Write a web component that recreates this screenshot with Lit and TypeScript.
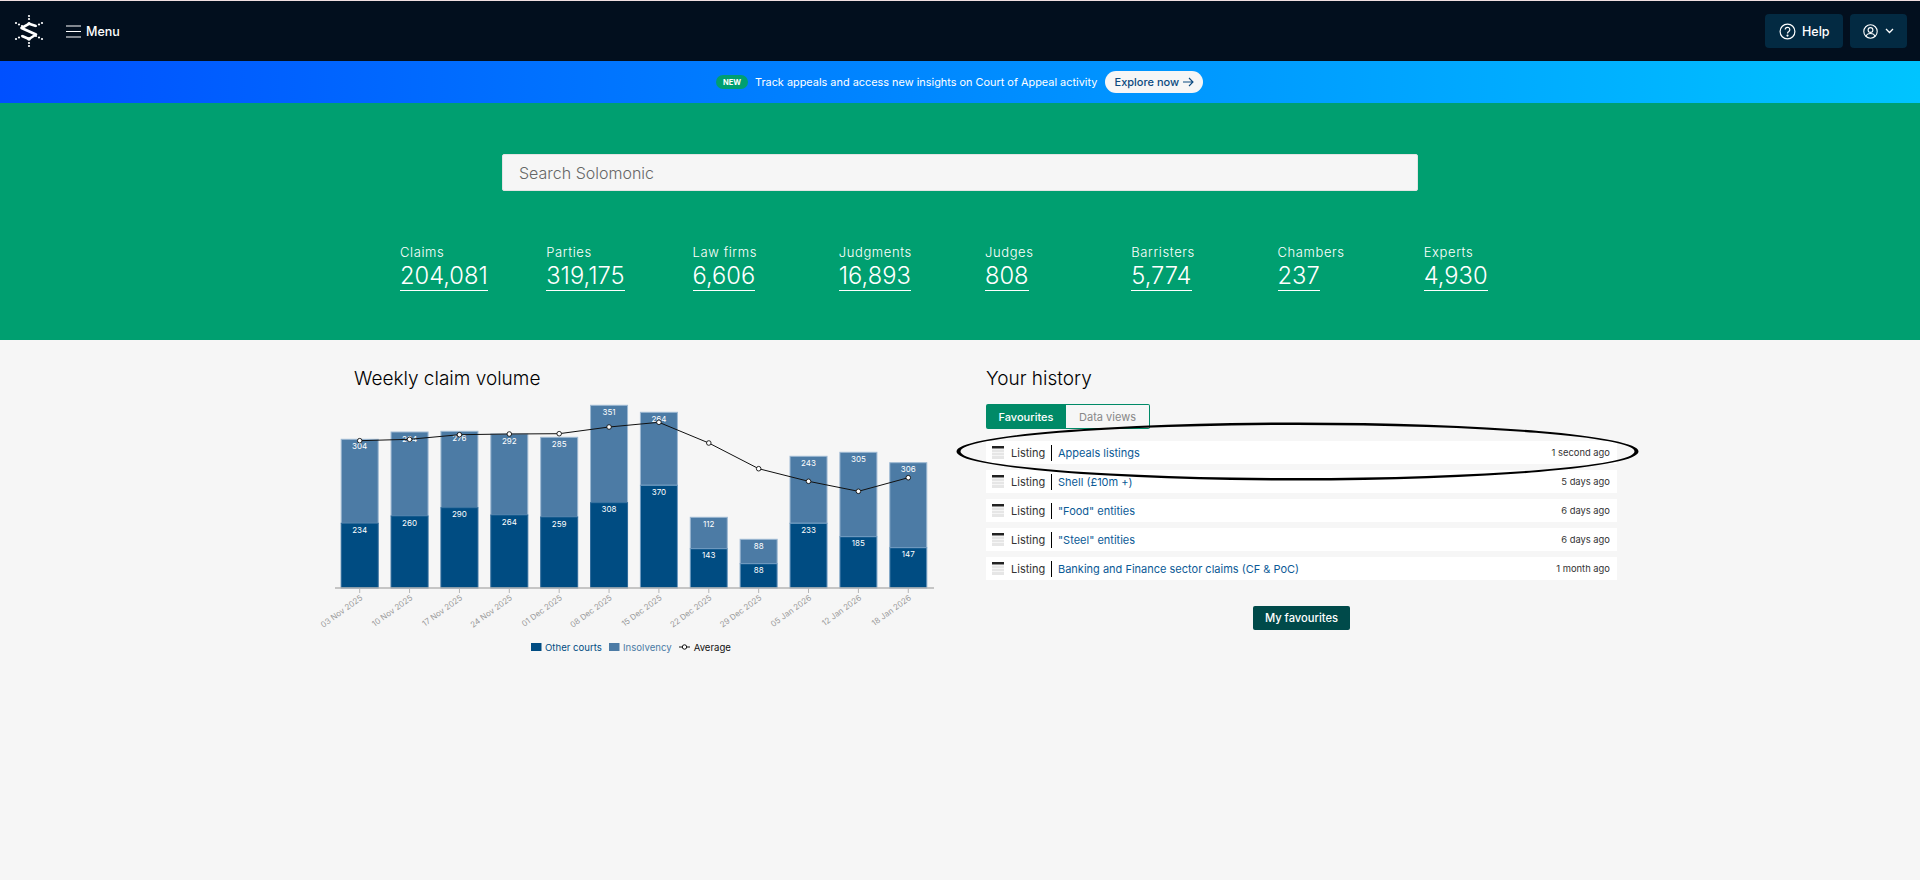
import { LitElement, html, css, svg } from "lit";
import { customElement } from "lit/decorators.js";

const stats = [
  ["Claims", "204,081"], ["Parties", "319,175"], ["Law firms", "6,606"], ["Judgments", "16,893"],
  ["Judges", "808"], ["Barristers", "5,774"], ["Chambers", "237"], ["Experts", "4,930"],
];
const history = [
  ["Appeals listings", "1 second ago"],
  ["Shell (£10m +)", "5 days ago"],
  ['"Food" entities', "6 days ago"],
  ['"Steel" entities', "6 days ago"],
  ["Banking and Finance sector claims (CF & PoC)", "1 month ago"],
];
const OY = 393;
const AXIS = 588 - OY;
const bars = [
  ["03 Nov 2025", 523.3, 439.3, "234", "304", 440.7],
  ["10 Nov 2025", 516, 432, "260", "284", 439.3],
  ["17 Nov 2025", 507.7, 431.3, "290", "276", 434.7],
  ["24 Nov 2025", 515, 434, "264", "292", 434],
  ["01 Dec 2025", 517, 437.3, "259", "285", 433.7],
  ["08 Dec 2025", 502.7, 405.3, "308", "351", 427],
  ["15 Dec 2025", 485.3, 412.3, "370", "264", 422.3],
  ["22 Dec 2025", 548.7, 517.3, "143", "112", 443],
  ["29 Dec 2025", 563.7, 539.3, "88", "88", 468.7],
  ["05 Jan 2026", 523.3, 456.3, "233", "243", 481.3],
  ["12 Jan 2026", 536.7, 452.3, "185", "305", 491.3],
  ["18 Jan 2026", 547.7, 462.7, "147", "306", 477.7],
] as const;
const cx = (i: number) => 39.7 + i * 49.87;
const yy = (v: number) => v - OY;

@customElement("app-root")
export class AppRoot extends LitElement {
  static styles = css`
    :host { display: block; min-height: 880px; background: #f6f6f6; font-family: Inter, "Liberation Sans", sans-serif; color: #111; position: relative; overflow: hidden; }
    * { box-sizing: border-box; }
    .nav { height: 61px; border-top: 1px solid #f0dfe0; background: #020f1e; display: flex; align-items: center; padding: 0 13px 0 14px; color: #fff; }
    .logo { width: 30px; height: 34px; display: block; }
    .menu { display: flex; align-items: center; margin-left: 22px; font-size: 12.5px; font-weight: 500; gap: 5px; }
    .spacer { flex: 1; }
    .btn { height: 34px; background: #032a42; border-radius: 4px; display: flex; align-items: center; color: #fff; font-size: 12.5px; font-weight: 500; }
    .help { width: 78px; padding-left: 14px; gap: 6px; }
    .user { width: 57px; padding-left: 13px; gap: 7px; margin-left: 7px; }
    .banner { height: 42px; background: linear-gradient(90deg, #0050ff 0%, #00c4ff 100%); display: flex; align-items: center; padding-left: 716px; color: #fff; font-size: 10.9px; }
    .new { width: 32px; height: 14px; border-radius: 7px; background: #009f70; font-size: 7.5px; font-weight: 700; display: flex; align-items: center; justify-content: center; margin-right: 7px; }
    .explore { margin-left: 8px; width: 98px; height: 22px; border-radius: 11px; background: #f6f6f6; color: #0b4a80; font-size: 11px; font-weight: 500; display: flex; align-items: center; justify-content: center; gap: 4px; }
    .hero { height: 237px; background: #009f70; padding-top: 51px; }
    .search { width: 916px; height: 37px; margin-left: 502px; background: #f6f6f6; border-radius: 2px; border: 1px solid #e4e4e4; padding-left: 16px; display: flex; align-items: center; font-size: 16px; font-weight: 300; color: #666; }
    .stats { display: grid; grid-template-columns: repeat(8, 146.25px); margin: 53px 0 0 400px; color: #fff; }
    .stat-label { font-size: 13px; font-weight: 300; letter-spacing: 0.6px; line-height: 16px; }
    .stat-value { display: inline-block; font-size: 23.7px; font-weight: 300; line-height: 29px; border-bottom: 1px solid #fff; margin-top: 1px; }
    .main { display: grid; grid-template-columns: 666px 631px; padding: 25px 0 0 320px; }
    h2 { margin: 0; font-size: 19px; font-weight: 300; line-height: 28px; color: #000; }
    .left h2 { padding-left: 34px; }
    .chart { display: block; }
    .tabs { display: flex; margin-top: 11px; width: 164px; height: 25px; font-size: 11px; }
    .tab-on { width: 80px; background: #008a67; color: #fff; font-weight: 500; display: flex; align-items: center; justify-content: center; border-radius: 2px 0 0 2px; }
    .tab-off { flex: 1; border: 1px solid #008a67; border-left: 0; color: #888; display: flex; align-items: center; justify-content: center; border-radius: 0 2px 2px 0; }
    .rows { margin-top: 12px; display: flex; flex-direction: column; gap: 6px; }
    .row { height: 23px; background: #fff; display: flex; align-items: center; padding: 0 7px 0 6px; font-size: 11px; }
    .ic { width: 12px; height: 13px; display: block; }
    .type { margin-left: 7px; color: #333; width: 40px; }
    .sep { width: 1px; height: 16px; background: #000; margin-right: 6px; }
    .name { color: #0b5a96; flex: 1; }
    .when { font-size: 9.4px; color: #333; }
    .fav-wrap { display: flex; justify-content: center; margin-top: 26px; }
    .fav { width: 97px; height: 24px; background: #004a4a; color: #fff; border-radius: 2px; font-size: 11.2px; font-weight: 500; display: flex; align-items: center; justify-content: center; }
    .oval { position: absolute; left: 950px; top: 418px; width: 700px; height: 70px; pointer-events: none; }
    text { font-family: Inter, "Liberation Sans", sans-serif; }
  `;

  private logo() {
    const dots = [[15,2],[15,5],[15,29],[15,32],[2,9],[5,10.5],[8,12],[28,9],[25,10.5],[22,12],[2,25],[5,23.5],[8,22],[28,25],[25,23.5],[22,22]];
    return html`<svg class="logo" viewBox="0 0 30 34" fill="#fff">
      ${dots.map((d) => svg`<circle cx=${d[0]} cy=${d[1]} r="1.1"></circle>`)}
      <circle cx="15" cy="9.5" r="1.6"></circle><circle cx="15" cy="25" r="1.8"></circle>
      <path d="M22 12 L15 9.8 L7.5 14 L22 20.5 L15 25 L8 22" fill="none" stroke="#fff" stroke-width="2.6" stroke-linejoin="round"></path>
    </svg>`;
  }

  private chart() {
    const line = bars.map((b, i) => `${cx(i)},${yy(b[5])}`).join(" ");
    const ly = 647 - OY;
    return html`<svg class="chart" width="640" height="270" viewBox="0 0 640 270">
      ${bars.map((b, i) => {
        const x = cx(i) - 18.5;
        const edge = i < 6 ? "#2f6a9a" : "#6f9ac0";
        return svg`
          <rect x=${x} y=${yy(b[2])} width="37" height=${yy(b[1]) - yy(b[2])} fill="#4c7ba5" stroke="#9db8d2" stroke-width="1"></rect>
          <rect x=${x} y=${yy(b[1])} width="37" height=${AXIS - yy(b[1])} fill="#004c82" stroke=${edge} stroke-width="1"></rect>
          <text x=${cx(i)} y=${yy(b[2]) + 9.5} text-anchor="middle" font-size="8" fill="#fff">${b[4]}</text>
          <text x=${cx(i)} y=${yy(b[1]) + 9.5} text-anchor="middle" font-size="8" fill="#fff">${b[3]}</text>
          <line x1=${cx(i)} x2=${cx(i)} y1=${AXIS} y2=${AXIS + 5} stroke="#b5b5b5"></line>
          <text transform="translate(${cx(i) + 3.5} ${AXIS + 11}) rotate(-36)" text-anchor="end" font-size="8" fill="#9a9a9a">${b[0]}</text>`;
      })}
      <line x1="15" x2="614" y1=${AXIS} y2=${AXIS} stroke="#b5b5b5" stroke-width="1.5"></line>
      <polyline points=${line} fill="none" stroke="#111" stroke-width="1"></polyline>
      ${bars.map((b, i) => svg`<circle cx=${cx(i)} cy=${yy(b[5])} r="2.3" fill="#fff" stroke="#111" stroke-width="0.9"></circle>`)}
      <rect x="211" y=${ly - 4} width="10.500" height="8" fill="#004c82"></rect>
      <text x="225" y=${ly + 3.500} font-size="9.600" fill="#004c82">Other courts</text>
      <rect x="289" y=${ly - 4} width="10.500" height="8" fill="#4c7ba5"></rect>
      <text x="303" y=${ly + 3.500} font-size="9.600" fill="#4c7ba5">Insolvency</text>
      <line x1="359" x2="370" y1=${ly} y2=${ly} stroke="#111"></line>
      <circle cx="364.500" cy=${ly} r="2.200" fill="#fff" stroke="#111"></circle>
      <text x="373.700" y=${ly + 3.500} font-size="9.600" fill="#111">Average</text>
    </svg>`;
  }

  render() {
    return html`
      <div class="nav">
        ${this.logo()}
        <div class="menu">
          <svg width="15" height="13" viewBox="0 0 15 13" stroke="#fff" stroke-width="1.2"><path d="M0 1H15M0 6.500H15M0 12H15"></path></svg>
          <span>Menu</span>
        </div>
        <div class="spacer"></div>
        <div class="btn help">
          <svg width="17" height="17" viewBox="0 0 17 17" fill="none" stroke="#fff" stroke-width="1.2"><circle cx="8.500" cy="8.500" r="7.400"></circle><path d="M6.200 6.600a2.300 2.300 0 1 1 3.600 1.900c-.8.500-1.300 1-1.300 2"></path><circle cx="8.500" cy="12.600" r=".5" fill="#fff"></circle></svg>
          <span>Help</span>
        </div>
        <div class="btn user">
          <svg width="15" height="15" viewBox="0 0 15 15" fill="none" stroke="#fff" stroke-width="1.100"><circle cx="7.500" cy="7.500" r="6.700"></circle><circle cx="7.500" cy="6" r="2.400"></circle><path d="M3.200 12.300c.5-2 2.200-2.800 4.300-2.800s3.800.8 4.300 2.800"></path></svg>
          <svg width="9" height="6" viewBox="0 0 9 6" fill="none" stroke="#fff" stroke-width="1.300"><path d="M1 1l3.500 3.500L8 1"></path></svg>
        </div>
      </div>
      <div class="banner">
        <span class="new">NEW</span>
        <span>Track appeals and access new insights on Court of Appeal activity</span>
        <span class="explore">Explore now
          <svg width="11" height="10" viewBox="0 0 11 10" fill="none" stroke="#0b4a80" stroke-width="1.100"><path d="M0 5H10M6 1l4 4-4 4"></path></svg>
        </span>
      </div>
      <div class="hero">
        <div class="search">Search Solomonic</div>
        <div class="stats">
          ${stats.map((s) => html`<div><div class="stat-label">${s[0]}</div><span class="stat-value">${s[1]}</span></div>`)}
        </div>
      </div>
      <div class="main">
        <div class="left">
          <h2>Weekly claim volume</h2>
          ${this.chart()}
        </div>
        <div>
          <h2>Your history</h2>
          <div class="tabs"><div class="tab-on">Favourites</div><div class="tab-off">Data views</div></div>
          <div class="rows">
            ${history.map((h) => html`<div class="row">
              <svg class="ic" viewBox="0 0 12 13"><rect width="12" height="2.500" fill="#222"></rect><rect y="3.500" width="12" height="9.500" fill="#e6e6e6"></rect><path d="M0 6.500H12M0 9.500H12" stroke="#fff" stroke-width=".6"></path></svg>
              <span class="type">Listing</span><span class="sep"></span>
              <span class="name">${h[0]}</span><span class="when">${h[1]}</span>
            </div>`)}
          </div>
          <div class="fav-wrap"><div class="fav">My favourites</div></div>
        </div>
      </div>
      <svg class="oval" viewBox="0 0 700 70"><path fill="#000" fill-rule="evenodd" d="M6.500 33.500a341 29 0 1 0 682 0a341 29 0 1 0 -682 0ZM10.500 33.500a337 26.500 0 1 0 674 0a337 26.500 0 1 0 -674 0Z"></path></svg>
    `;
  }
}
